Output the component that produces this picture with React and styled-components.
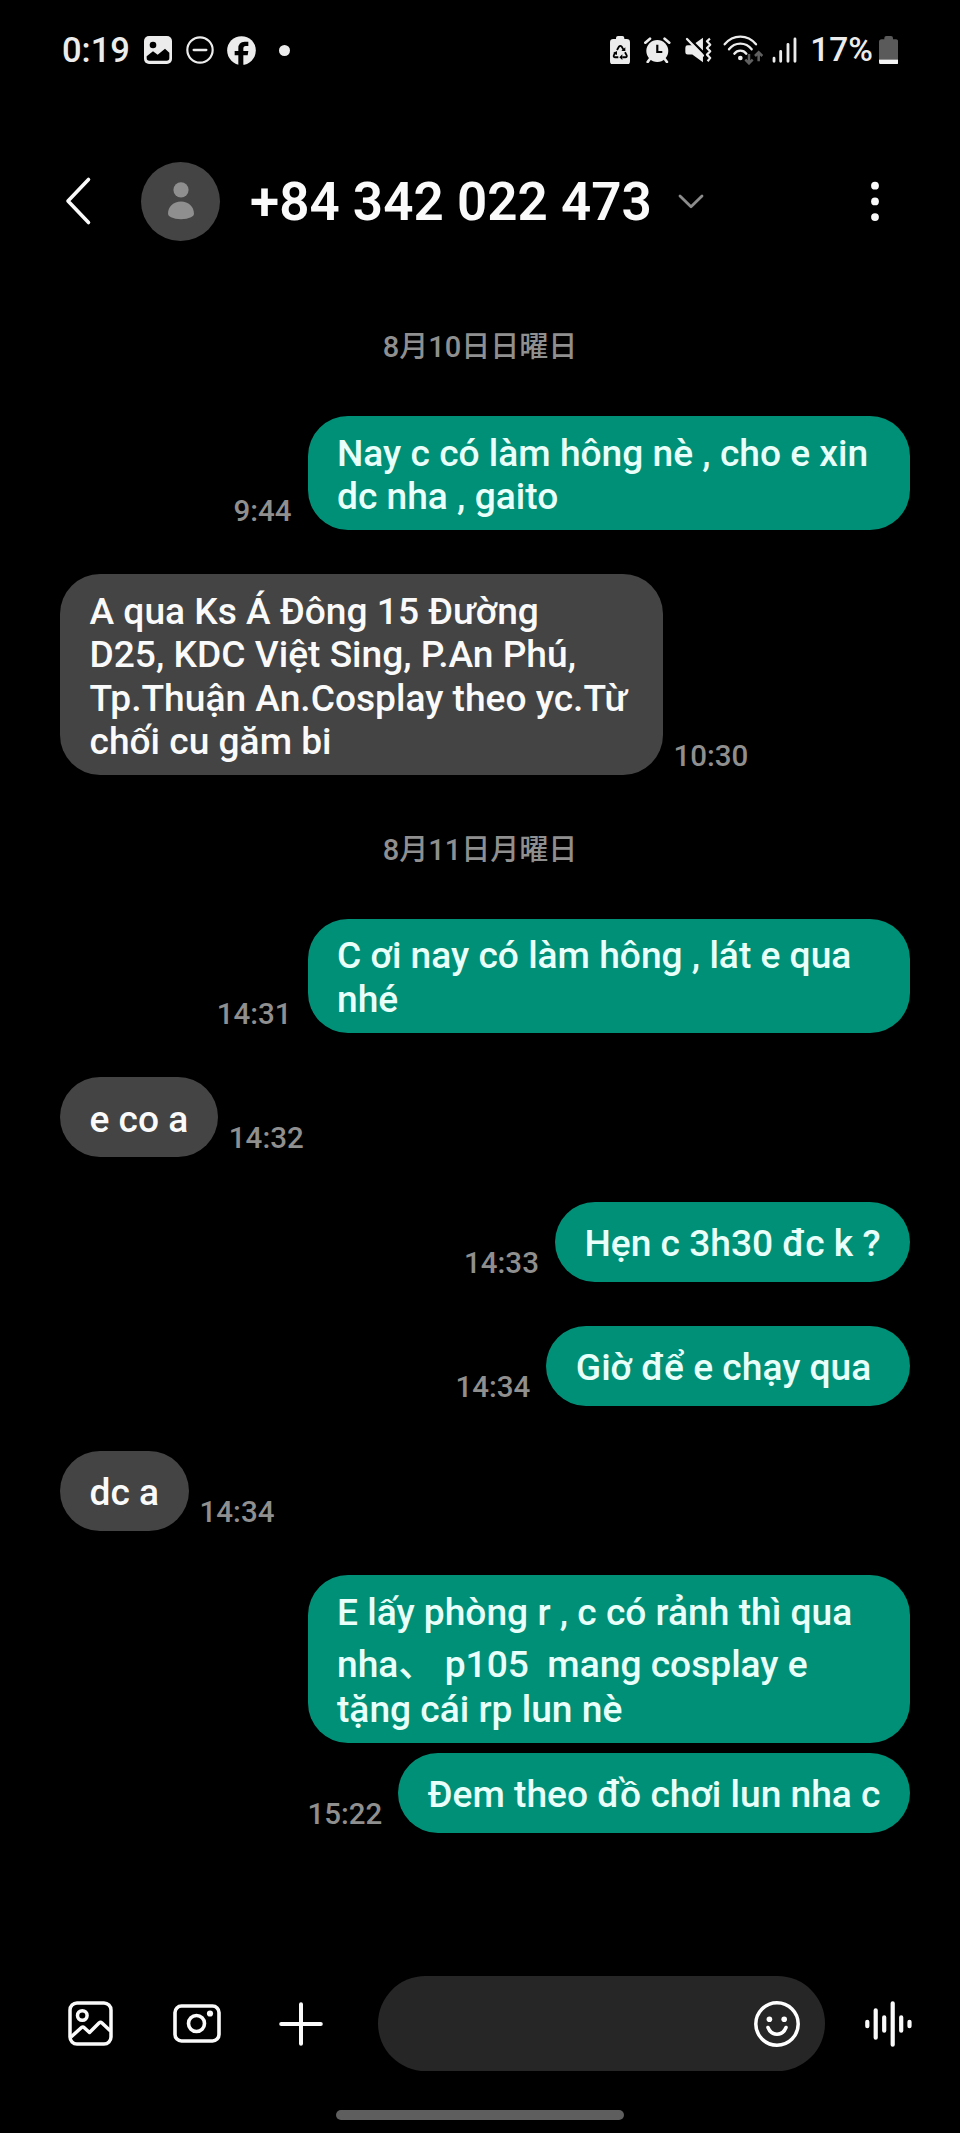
import React from "react";
import styled, { createGlobalStyle } from "styled-components";

const messages = [
  { date: "8月10日日曜日" },
  { mine: true, time: "9:44", wide: true, lines: ["Nay c có làm hông nè , cho e xin", "dc nha , gaito"] },
  {
    time: "10:30",
    wide: true,
    lines: [
      "A qua Ks Á Đông 15 Đường",
      "D25, KDC Việt Sing, P.An Phú,",
      "Tp.Thuận An.Cosplay theo yc.Từ",
      "chối cu găm bi",
    ],
  },
  { date: "8月11日月曜日" },
  { mine: true, time: "14:31", wide: true, lines: ["C ơi nay có làm hông , lát e qua", "nhé"] },
  { time: "14:32", lines: ["e co a"] },
  { mine: true, time: "14:33", lines: ["Hẹn c 3h30 đc k ?"] },
  { mine: true, time: "14:34", lines: ["Giờ để e chạy qua "] },
  { time: "14:34", lines: ["dc a"] },
  {
    mine: true,
    wide: true,
    grouped: true,
    lines: ["E lấy phòng r , c có rảnh thì qua", "nha、 p105  mang cosplay e", "tặng cái rp lun nè"],
  },
  { mine: true, time: "15:22", lines: ["Đem theo đồ chơi lun nha c"] },
];

const App = () => {
  return (
    <React.Fragment>
      <GlobalStyle />
      <Screen>
        <StatusBar />
        <Header />
        <MessageList>
          {messages.map((m, i) =>
            m.date ? (
              <DateLabel key={i}>{m.date}</DateLabel>
            ) : (
              <MessageRow key={i} $mine={m.mine} $grouped={m.grouped}>
                <Bubble $mine={m.mine} $wide={m.wide}>
                  {m.lines.map((line) => (
                    <Line key={line} $tall={line.includes("、")}>
                      {line}
                    </Line>
                  ))}
                </Bubble>
                {m.time && <Time $mine={m.mine}>{m.time}</Time>}
              </MessageRow>
            )
          )}
        </MessageList>
        <InputBar />
        <HomeArea>
          <HomeHandle />
        </HomeArea>
      </Screen>
    </React.Fragment>
  );
};
export default App;

const StatusBar = () => (
  <StatusBox>
    <Clock>0:19</Clock>
    <Icon viewBox="0 0 84 84" width="28" height="28">
      <rect width="84" height="84" rx="15" fill="#ececec" />
      <circle cx="27" cy="27" r="10" fill="#000" />
      <path d="M8 66V61L27 46L41 56L63 38L76 50V66Q76 74 68 74H16Q8 74 8 66Z" fill="#000" />
    </Icon>
    <Icon viewBox="0 0 84 84" width="28" height="28" $left={14}>
      <circle cx="42" cy="42" r="38" fill="none" stroke="#ececec" strokeWidth="6.5" />
      <path d="M23 42H61" stroke="#ececec" strokeWidth="7" strokeLinecap="round" />
    </Icon>
    <Icon viewBox="0 0 87 87" width="29" height="29" $left={13}>
      <circle cx="43.5" cy="43.5" r="43" fill="#ececec" />
      <path d="M34 87V58H23V45H34V37Q34 17 53 17H64V30H56Q49 30 49 38V45H64L62 58H49V87Z" fill="#000" />
    </Icon>
    <Dot />
    <Spacer />
    <Icon viewBox="0 0 60 86" width="20" height="28.6">
      <path d="M18 9V6Q18 0 24 0H37Q43 0 43 6V9H50Q60 9 60 19V76Q60 86 50 86H10Q0 86 0 76V19Q0 9 10 9Z" fill="#ececec" />
      <path
        d="M21 42L27 32Q31 27 35 32L41 42M45 49L50 58Q52 64 46 64H37M25 64H15Q9 63 12 57L17 49"
        fill="none"
        stroke="#000"
        strokeWidth="5.5"
      />
      <path d="M34 45H46V34ZM37 55V72L28 64ZM9 51L21 45V57Z" fill="#000" />
    </Icon>
    <Icon viewBox="0 0 80 80" width="26.6" height="26.6" $left={14.6}>
      <circle cx="40" cy="42" r="33" fill="#ececec" />
      <path d="M4 17L18 5M62 5L76 17M17 67L11 75M63 67L69 75" stroke="#ececec" strokeWidth="8" strokeLinecap="round" />
      <path d="M40 23V45H55" fill="none" stroke="#000" strokeWidth="6.5" />
    </Icon>
    <Icon viewBox="0 0 80 80" width="26.6" height="26.6" $left={14}>
      <path d="M8 25H22L54 2V76L22 53H8Q1 53 1 46V32Q1 25 8 25Z" fill="#ececec" />
      <path d="M12 4L58 50" stroke="#000" strokeWidth="8" />
      <path d="M6 6L54 56" stroke="#ececec" strokeWidth="7" strokeLinecap="round" />
      <path d="M75 5L66 13L76 23L66 33L76 43L66 53L76 63L68 73" fill="none" stroke="#ececec" strokeWidth="6.5" strokeLinejoin="round" />
    </Icon>
    <Icon viewBox="0 0 123 90" width="41" height="30" $left={11.8}>
      <g fill="none" stroke="#ececec" strokeWidth="7" strokeLinecap="round">
        <path d="M5 28Q24 5 52 5T99 28" />
        <path d="M18 43Q31 26 52 26T86 43" />
        <path d="M34 56Q41 47 52 47T70 56" />
      </g>
      <circle cx="52" cy="69" r="7" fill="#ececec" />
      <path d="M78 57V84M67 74L78 85L89 74M107 79V53M96 63L107 52L118 63" fill="none" stroke="#606060" strokeWidth="7.5" />
    </Icon>
    <Icon viewBox="0 0 75 80" width="25" height="26.6" $left={7.4}>
      <path d="M6 64V73M26 43V73M48 22V73M69 6V73" stroke="#ececec" strokeWidth="8.5" strokeLinecap="round" />
    </Icon>
    <Percent>17%</Percent>
    <Icon viewBox="0 0 58 86" width="19.3" height="28.6">
      <path d="M16 10V6Q16 0 22 0H36Q42 0 42 6V10H50Q58 10 58 18V71H0V18Q0 10 8 10Z" fill="#5a5a5a" />
      <path d="M0 71H58V78Q58 86 50 86H8Q0 86 0 78Z" fill="#f4f4f4" />
    </Icon>
  </StatusBox>
);

const Header = () => (
  <HeaderBox>
    <Icon viewBox="0 0 28 50" width="28" height="50">
      <path d="M24.5 3.5L4 25L24.5 46.5" fill="none" stroke="#fafafa" strokeWidth="3.6" strokeLinecap="round" strokeLinejoin="round" />
    </Icon>
    <Avatar>
      <svg viewBox="0 0 28 38" width="28" height="38">
        <circle cx="14" cy="7.8" r="7.6" fill="#8f8f8f" />
        <path d="M1 32C1 24.5 6.5 19.6 14 19.6S27 24.5 27 32Q27 34 24 35.3Q20 37.3 14 37.3T4 35.3Q1 34 1 32Z" fill="#8f8f8f" />
      </svg>
    </Avatar>
    <Title>+84 342 022 473</Title>
    <Icon viewBox="0 0 28 18" width="28" height="18">
      <path d="M3 4L14 14.8L25 4" fill="none" stroke="#8c8c8c" strokeWidth="2.8" strokeLinecap="round" strokeLinejoin="round" />
    </Icon>
    <Spacer />
    <Icon viewBox="0 0 8 40" width="8" height="40">
      <circle cx="4" cy="4.7" r="3.9" fill="#fafafa" />
      <circle cx="4" cy="20.4" r="3.9" fill="#fafafa" />
      <circle cx="4" cy="36.1" r="3.9" fill="#fafafa" />
    </Icon>
  </HeaderBox>
);

const InputBar = () => (
  <InputBox>
    <Icon viewBox="0 0 45 45" width="45" height="45">
      <g fill="none" stroke="#fafafa" strokeWidth="3.5" strokeLinejoin="round">
        <rect x="2" y="2" width="41" height="41" rx="7" />
        <circle cx="14.3" cy="14.5" r="4.8" />
        <path d="M3 36L13.5 26.5Q15 25.5 16.3 26.7L21.5 31.5L31 22Q32.5 20.6 34 22L42.5 30" />
      </g>
    </Icon>
    <Icon viewBox="0 0 48 39" width="48" height="39" $left={59.5}>
      <g fill="none" stroke="#fafafa" strokeWidth="3.6">
        <rect x="2" y="2" width="44" height="35" rx="6.5" />
        <circle cx="23.5" cy="19.5" r="8" />
      </g>
      <circle cx="37" cy="9.5" r="3.1" fill="#fafafa" />
    </Icon>
    <Icon viewBox="0 0 44 44" width="44" height="44" $left={58}>
      <path d="M2.2 22H41.8M22 2.2V41.8" stroke="#fafafa" strokeWidth="4" strokeLinecap="round" />
    </Icon>
    <TextField>
      <svg viewBox="0 0 46 46" width="46" height="46">
        <circle cx="23" cy="23" r="21.2" fill="none" stroke="#fff" strokeWidth="3.5" />
        <circle cx="15.4" cy="18.2" r="2.8" fill="#fff" />
        <circle cx="30.2" cy="18.2" r="2.8" fill="#fff" />
        <path d="M14 26.5C17.5 35.5 28.5 35.5 32 26.5" fill="none" stroke="#fff" strokeWidth="3.5" strokeLinecap="round" />
      </svg>
    </TextField>
    <Icon viewBox="0 0 47 46" width="47" height="46" $left={40}>
      <path
        d="M2.3 20.8V25.2M10.7 9.3V36.7M19.2 16.3V29.7M27.7 2.3V43.7M36.2 16.3V29.7M44.5 20.8V25.2"
        stroke="#fafafa"
        strokeWidth="4.2"
        strokeLinecap="round"
      />
    </Icon>
  </InputBox>
);

const GlobalStyle = createGlobalStyle`
  body {
    margin: 0;
    background: #000;
  }
`;

const Screen = styled.div`
  width: 960px;
  height: 2133px;
  display: flex;
  flex-direction: column;
  box-sizing: border-box;
  overflow: hidden;
  background: #000;
  color: #fafafa;
  font-family: Roboto, "Noto Sans CJK JP", sans-serif;
`;

const Icon = styled.svg`
  flex-shrink: 0;
  margin-left: ${(props) => props.$left || 0}px;
`;

const Spacer = styled.div`
  flex: 1;
`;

const StatusBox = styled.div`
  height: 100px;
  padding: 0 62px;
  box-sizing: border-box;
  display: flex;
  align-items: center;
`;

const Clock = styled.div`
  width: 82px;
  color: #ececec;
  font-size: 34.5px;
  font-weight: 500;
  line-height: 40px;
  white-space: nowrap;
`;

const Percent = styled(Clock)`
  width: 68.5px;
  margin-left: 13.5px;
  font-size: 33.5px;
`;

const Dot = styled.div`
  width: 11px;
  height: 11px;
  margin-left: 23px;
  border-radius: 50%;
  background: #ececec;
`;

const HeaderBox = styled.div`
  height: 202px;
  padding: 0 81.5px 0 64px;
  box-sizing: border-box;
  display: flex;
  align-items: center;
`;

const Avatar = styled.div`
  width: 79px;
  height: 79px;
  margin-left: 49px;
  border-radius: 50%;
  background: #444;
  display: flex;
  align-items: center;
  justify-content: center;
`;

const Title = styled.h1`
  width: 427px;
  margin: 2px 0 0 30px;
  font-size: 53px;
  font-weight: 600;
  line-height: 62px;
  white-space: nowrap;
`;

const MessageList = styled.div`
  flex: 1;
  padding: 15px 50px 0 60px;
  display: flex;
  flex-direction: column;
`;

const DateLabel = styled.div`
  height: 44px;
  margin: 8px 0 47px;
  padding-right: 10px;
  color: #8f8f8f;
  font-size: 29px;
  font-weight: 500;
  line-height: 44px;
  text-align: center;
`;

const MessageRow = styled.div`
  display: flex;
  flex-direction: ${(props) => (props.$mine ? "row-reverse" : "row")};
  align-items: flex-end;
  margin-bottom: ${(props) => (props.$grouped ? 10 : 44.45)}px;
`;

const Bubble = styled.div`
  box-sizing: border-box;
  width: ${(props) => (props.$wide ? "602.5px" : "auto")};
  min-height: 80px;
  padding: 15.5px 29.5px 11.5px;
  border-radius: 40px;
  background: ${(props) => (props.$mine ? "#009077" : "#444")};
  display: flex;
  flex-direction: column;
  justify-content: center;
  color: ${(props) => (props.$mine ? "#e9fff9" : "#fafafa")};
  font-size: 37.15px;
  font-weight: 500;
`;

const Line = styled.span`
  display: block;
  height: 43.5px;
  padding: ${(props) => (props.$tall ? "8.5px 0 2px" : "0")};
  line-height: 43.5px;
  white-space: pre;
`;

const Time = styled.span`
  margin: ${(props) => (props.$mine ? "0 16px 0 0" : "0 0 0 11px")};
  padding-bottom: 1px;
  color: #8f8f8f;
  font-size: 29.5px;
  font-weight: 500;
  line-height: 35px;
`;

const InputBox = styled.div`
  height: 95px;
  padding: 0 47px 0 68px;
  display: flex;
  align-items: center;
`;

const TextField = styled.div`
  width: 447px;
  height: 95px;
  margin-left: 55px;
  padding-right: 25px;
  box-sizing: border-box;
  border-radius: 48px;
  background: #262626;
  display: flex;
  align-items: center;
  justify-content: flex-end;
`;

const HomeArea = styled.div`
  height: 62px;
  display: flex;
  align-items: flex-end;
  justify-content: center;
`;

const HomeHandle = styled.div`
  width: 288px;
  height: 10px;
  margin-bottom: 13px;
  border-radius: 5px;
  background: #5e5e5e;
`;
